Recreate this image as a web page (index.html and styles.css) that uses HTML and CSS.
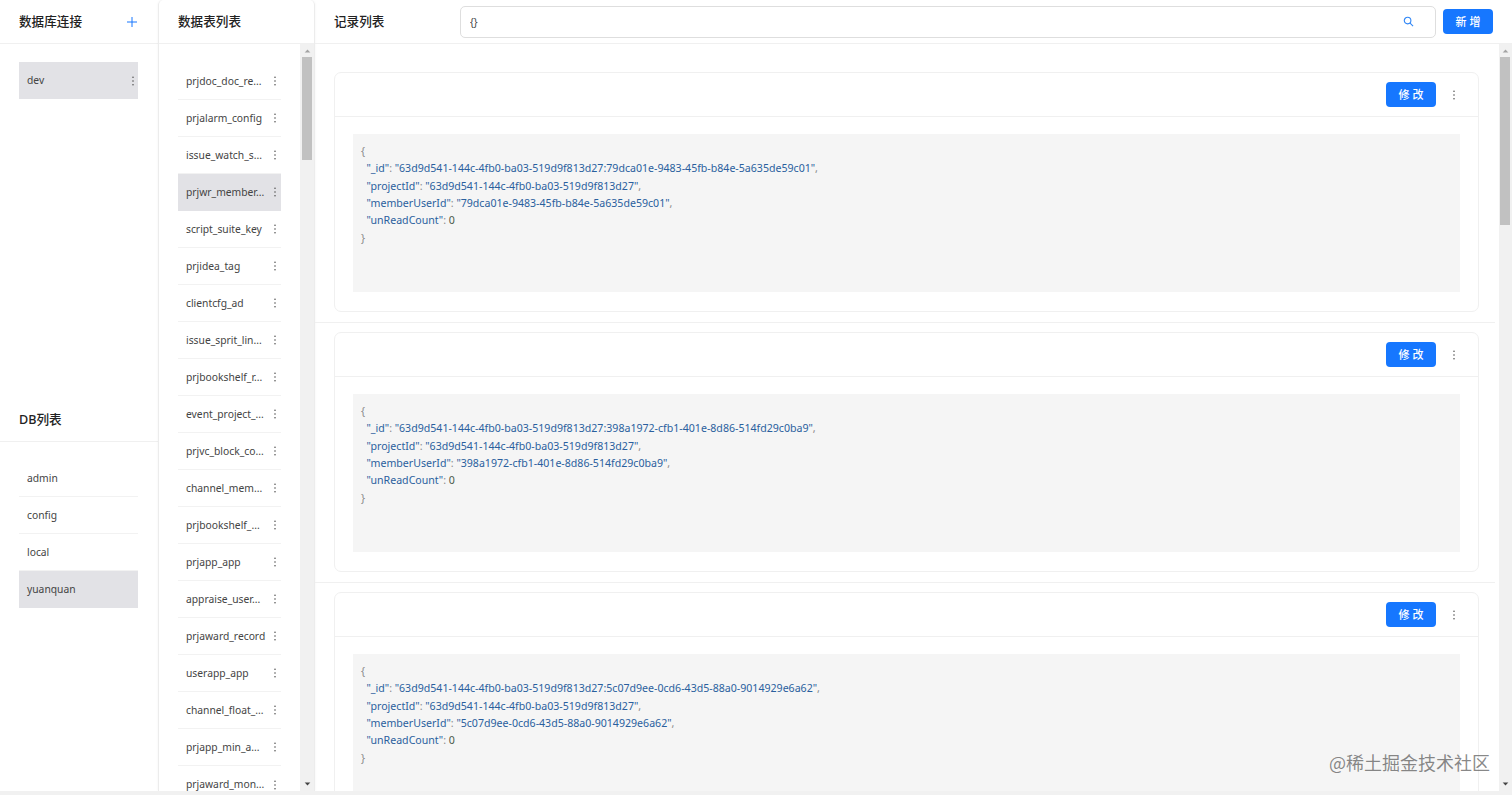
FILE: index.html
```html
<!DOCTYPE html>
<html lang="zh-CN">
<head>
<meta charset="utf-8">
<title>记录列表</title>
<link rel="stylesheet" href="styles.css">
</head>
<body>
<svg class="defs" width="0" height="0" aria-hidden="true">
  <symbol id="dots" viewBox="0 0 4 12"><circle cx="2" cy="2.2" r="0.8"/><circle cx="2" cy="6" r="0.8"/><circle cx="2" cy="9.8" r="0.8"/></symbol>
  <symbol id="up" viewBox="0 0 8 5"><path d="M4 0.5 7.5 4.5H0.5Z"/></symbol>
  <symbol id="down" viewBox="0 0 8 5"><path d="M0.5 0.5H7.5L4 4.5Z"/></symbol>
</svg>
<div class="app">
  <aside class="col-conn">
    <section class="conn-top">
      <header class="head head-between">
        <h2 class="title">数据库连接</h2>
        <svg class="plus" viewBox="0 0 12 12"><path d="M6 1V11M1 6H11"/></svg>
      </header>
      <ul class="list list-conn">
        <li class="row row-active"><span class="name">dev</span><svg class="dots"><use href="#dots"/></svg></li>
      </ul>
    </section>
    <section class="conn-bottom">
      <header class="head"><h2 class="title">DB列表</h2></header>
      <ul class="list list-conn">
        <li class="row"><span class="name">admin</span></li>
        <li class="row"><span class="name">config</span></li>
        <li class="row"><span class="name">local</span></li>
        <li class="row row-active"><span class="name">yuanquan</span></li>
      </ul>
    </section>
  </aside>

  <aside class="col-tables">
    <header class="head"><h2 class="title">数据表列表</h2></header>
    <div class="tables-body">
      <ul class="list list-tables">
        <li class="row"><span class="name">prjdoc_doc_re...</span><svg class="dots"><use href="#dots"/></svg></li>
        <li class="row"><span class="name">prjalarm_config</span><svg class="dots"><use href="#dots"/></svg></li>
        <li class="row"><span class="name">issue_watch_s...</span><svg class="dots"><use href="#dots"/></svg></li>
        <li class="row row-active"><span class="name">prjwr_member...</span><svg class="dots"><use href="#dots"/></svg></li>
        <li class="row"><span class="name">script_suite_key</span><svg class="dots"><use href="#dots"/></svg></li>
        <li class="row"><span class="name">prjidea_tag</span><svg class="dots"><use href="#dots"/></svg></li>
        <li class="row"><span class="name">clientcfg_ad</span><svg class="dots"><use href="#dots"/></svg></li>
        <li class="row"><span class="name">issue_sprit_lin...</span><svg class="dots"><use href="#dots"/></svg></li>
        <li class="row"><span class="name">prjbookshelf_r...</span><svg class="dots"><use href="#dots"/></svg></li>
        <li class="row"><span class="name">event_project_...</span><svg class="dots"><use href="#dots"/></svg></li>
        <li class="row"><span class="name">prjvc_block_co...</span><svg class="dots"><use href="#dots"/></svg></li>
        <li class="row"><span class="name">channel_mem...</span><svg class="dots"><use href="#dots"/></svg></li>
        <li class="row"><span class="name">prjbookshelf_...</span><svg class="dots"><use href="#dots"/></svg></li>
        <li class="row"><span class="name">prjapp_app</span><svg class="dots"><use href="#dots"/></svg></li>
        <li class="row"><span class="name">appraise_user...</span><svg class="dots"><use href="#dots"/></svg></li>
        <li class="row"><span class="name">prjaward_record</span><svg class="dots"><use href="#dots"/></svg></li>
        <li class="row"><span class="name">userapp_app</span><svg class="dots"><use href="#dots"/></svg></li>
        <li class="row"><span class="name">channel_float_...</span><svg class="dots"><use href="#dots"/></svg></li>
        <li class="row"><span class="name">prjapp_min_a...</span><svg class="dots"><use href="#dots"/></svg></li>
        <li class="row"><span class="name">prjaward_mon...</span><svg class="dots"><use href="#dots"/></svg></li>
      </ul>
      <div class="scrollbar scrollbar-tables">
        <svg class="arrow"><use href="#up"/></svg>
        <div class="track"><div class="thumb thumb-tables"></div></div>
        <svg class="arrow"><use href="#down"/></svg>
      </div>
    </div>
  </aside>

  <main class="col-main">
    <header class="main-head">
      <h2 class="title main-title">记录列表</h2>
      <div class="search">
        <input class="search-input" value="{}" aria-label="查询条件">
        <svg class="search-icon" viewBox="0 0 12 12"><circle cx="5" cy="5" r="3.6"/><path d="M7.7 7.7 11 11"/></svg>
      </div>
      <button class="btn btn-add">新 增</button>
    </header>
    <div class="main-body">
      <div class="records">
        <article class="card">
          <div class="card-head"><button class="btn">修 改</button><svg class="dots dots-card"><use href="#dots"/></svg></div>
          <div class="card-body"><pre class="json"><span class="p">{</span>
  <span class="k">"_id"</span><span class="p">:</span> <span class="s">"63d9d541-144c-4fb0-ba03-519d9f813d27:79dca01e-9483-45fb-b84e-5a635de59c01"</span><span class="p">,</span>
  <span class="k">"projectId"</span><span class="p">:</span> <span class="s">"63d9d541-144c-4fb0-ba03-519d9f813d27"</span><span class="p">,</span>
  <span class="k">"memberUserId"</span><span class="p">:</span> <span class="s">"79dca01e-9483-45fb-b84e-5a635de59c01"</span><span class="p">,</span>
  <span class="k">"unReadCount"</span><span class="p">:</span> <span class="n">0</span>
<span class="p">}</span></pre></div>
        </article>
        <hr class="divider">
        <article class="card">
          <div class="card-head"><button class="btn">修 改</button><svg class="dots dots-card"><use href="#dots"/></svg></div>
          <div class="card-body"><pre class="json"><span class="p">{</span>
  <span class="k">"_id"</span><span class="p">:</span> <span class="s">"63d9d541-144c-4fb0-ba03-519d9f813d27:398a1972-cfb1-401e-8d86-514fd29c0ba9"</span><span class="p">,</span>
  <span class="k">"projectId"</span><span class="p">:</span> <span class="s">"63d9d541-144c-4fb0-ba03-519d9f813d27"</span><span class="p">,</span>
  <span class="k">"memberUserId"</span><span class="p">:</span> <span class="s">"398a1972-cfb1-401e-8d86-514fd29c0ba9"</span><span class="p">,</span>
  <span class="k">"unReadCount"</span><span class="p">:</span> <span class="n">0</span>
<span class="p">}</span></pre></div>
        </article>
        <hr class="divider">
        <article class="card">
          <div class="card-head"><button class="btn">修 改</button><svg class="dots dots-card"><use href="#dots"/></svg></div>
          <div class="card-body"><pre class="json"><span class="p">{</span>
  <span class="k">"_id"</span><span class="p">:</span> <span class="s">"63d9d541-144c-4fb0-ba03-519d9f813d27:5c07d9ee-0cd6-43d5-88a0-9014929e6a62"</span><span class="p">,</span>
  <span class="k">"projectId"</span><span class="p">:</span> <span class="s">"63d9d541-144c-4fb0-ba03-519d9f813d27"</span><span class="p">,</span>
  <span class="k">"memberUserId"</span><span class="p">:</span> <span class="s">"5c07d9ee-0cd6-43d5-88a0-9014929e6a62"</span><span class="p">,</span>
  <span class="k">"unReadCount"</span><span class="p">:</span> <span class="n">0</span>
<span class="p">}</span></pre></div>
        </article>
      </div>
      <div class="scrollbar scrollbar-main">
        <svg class="arrow"><use href="#up"/></svg>
        <div class="track"><div class="thumb thumb-main"></div></div>
        <svg class="arrow"><use href="#down"/></svg>
      </div>
    </div>
  </main>
</div>
<div class="watermark">@稀土掘金技术社区</div>
</body>
</html>
```
FILE: styles.css
```css
* { box-sizing: border-box; }
html, body { height: 100%; }
body {
  margin: 0;
  overflow: hidden;
  position: relative;
  background: #f1f1f1;
  color: #333;
  font-family: "Noto Sans", "Noto Sans CJK SC", sans-serif;
  font-size: 10.3px;
}
.defs { position: absolute; }
ul { list-style: none; margin: 0; padding: 0; }
h2 { margin: 0; }

.app {
  display: flex;
  height: 791px;
  background: #fff;
  overflow: hidden;
}

/* Shared headers */
.head {
  height: 44px;
  flex: none;
  display: flex;
  align-items: center;
  padding: 0 19px;
  border-bottom: 1px solid #f0f0f0;
}
.head-between { justify-content: space-between; }
.title {
  margin-top: 2px;
  font-size: 12.6px;
  font-weight: 500;
  color: #222;
  line-height: 1;
  font-family: "Noto Sans", "Noto Sans CJK SC", sans-serif;
}
.plus {
  width: 12px;
  height: 12px;
  margin-right: 1px;
  fill: none;
  stroke: #1677ff;
  stroke-width: 1;
}

/* Rows */
.row {
  height: 37px;
  display: flex;
  align-items: center;
  justify-content: space-between;
  padding: 0 4px 0 8px;
  border-bottom: 1px solid #f2f2f2;
  white-space: nowrap;
  color: #444;
}
.row:last-child { border-bottom: 0; }
.row-active { background: #e2e2e6; border-bottom-color: #e2e2e6; }
.name { line-height: 1; }
.dots {
  width: 4px;
  height: 12px;
  flex: none;
  fill: #555;
}

/* Connections column */
.col-conn {
  width: 158px;
  flex: none;
  display: flex;
  flex-direction: column;
}
.conn-top { height: 398px; flex: none; }
.conn-bottom { flex: 1; }
.list-conn { padding: 18px 20px 0 19px; }
.list-conn .row { padding-right: 3px; }

/* Tables column */
.col-tables {
  width: 157px;
  flex: none;
  display: flex;
  flex-direction: column;
  border-left: 1px solid #ececec;
  border-right: 1px solid #ececec;
  border-radius: 5px 5px 0 0;
  box-shadow: 0 0 3px rgba(0, 0, 0, .05);
}
.tables-body {
  flex: 1;
  min-height: 0;
  display: flex;
}
.list-tables {
  flex: 1;
  min-width: 0;
  padding: 19px 19px 0 19px;
  overflow: hidden;
}

/* Scrollbars */
.scrollbar {
  flex: none;
  width: 14px;
  display: flex;
  flex-direction: column;
  align-items: center;
  background: #f1f1f1;
}
.scrollbar-main { width: 13px; }
.arrow {
  width: 7px;
  height: 4px;
  flex: none;
  margin: 5px 0 4px;
  fill: #a3a3a3;
}
.scrollbar .arrow:last-child { fill: #444; margin: 4px 0 5px; }
.track { flex: 1; width: 100%; padding: 0 1px; }
.scrollbar-tables .track { padding-left: 2px; }
.thumb { background: #c1c1c1; width: 10px; }
.thumb-tables { height: 103px; }
.thumb-main { height: 168px; }

/* Main column */
.col-main {
  flex: 1;
  min-width: 0;
  display: flex;
  flex-direction: column;
}
.main-head {
  height: 44px;
  flex: none;
  display: flex;
  align-items: center;
  padding: 0 19px;
  border-bottom: 1px solid #f0f0f0;
}
.main-title { width: 126px; flex: none; margin-top: 1px; }
.search {
  width: 976px;
  height: 32px;
  flex: none;
  display: flex;
  align-items: center;
  padding: 0 21px 0 9px;
  border: 1px solid #dedede;
  border-radius: 5px;
  margin-right: 7px;
}
.search-input {
  flex: 1;
  min-width: 0;
  border: 0;
  outline: 0;
  padding: 0;
  font: 10px "Noto Sans", sans-serif;
  color: #444;
  background: transparent;
}
.search-icon {
  width: 11px;
  height: 11px;
  fill: none;
  stroke: #2f86f6;
  stroke-width: 1.2;
}
.btn {
  width: 50px;
  height: 25px;
  flex: none;
  border: 0;
  border-radius: 4px;
  padding: 0;
  background: #1677ff;
  color: #fff;
  font-family: "Noto Sans", "Noto Sans CJK SC", sans-serif;
  font-size: 11px;
  font-weight: 500;
  line-height: 1;
}

.main-body {
  flex: 1;
  min-height: 0;
  display: flex;
}
.records {
  flex: 1;
  min-width: 0;
  padding: 28px 4px 0 0;
  overflow: hidden;
}
.card {
  margin: 0 16px 0 19px;
  height: 240px;
  border: 1px solid #f0f0f0;
  border-radius: 7px;
}
.card-head {
  height: 44px;
  display: flex;
  align-items: center;
  justify-content: flex-end;
  gap: 16px;
  padding-right: 22px;
  border-bottom: 1px solid #f0f0f0;
}
.card-body { padding: 17px 18px 0; }
.json {
  margin: 0;
  height: 158px;
  padding: 9px 8px;
  background: #f5f5f5;
  font-family: "Noto Sans", sans-serif;
  font-size: 10.6px;
  line-height: 17.33px;
  white-space: pre;
  overflow: hidden;
}
.p { color: #8a8a8a; }
.k, .s { color: #2a5f9e; }
.n { color: #4a5a4a; }
.divider {
  height: 1px;
  margin: 10px 0 9px;
  border: 0;
  background: #f0f0f0;
}

.watermark {
  position: absolute;
  right: 22px;
  top: 750px;
  font-family: "Noto Sans CJK SC", sans-serif;
  font-size: 18px;
  line-height: 24px;
  color: rgba(90, 90, 90, .72);
  white-space: nowrap;
}
```
